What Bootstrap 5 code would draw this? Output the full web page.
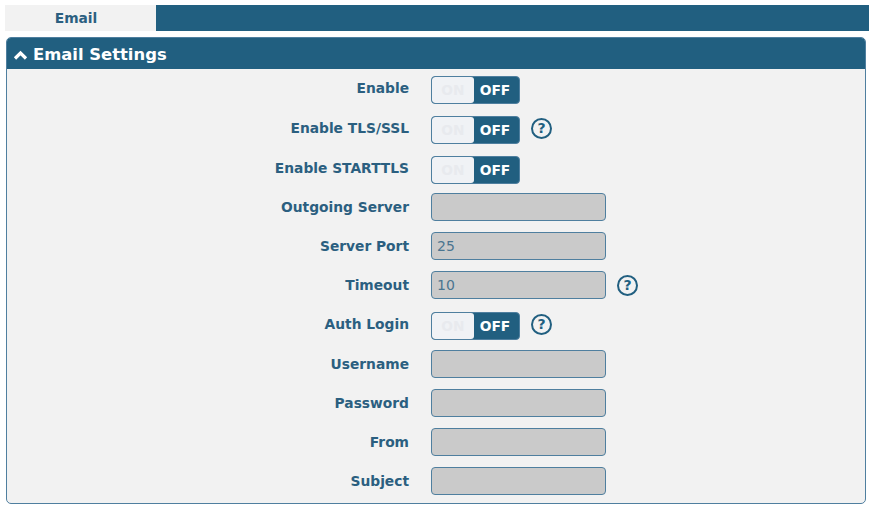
<!DOCTYPE html>
<html lang="en">
<head>
  <meta charset="UTF-8">
  <meta name="viewport" content="width=device-width, initial-scale=1.0">
  <title>Email Settings</title>
  <link href="https://cdn.jsdelivr.net/npm/bootstrap@5.3.0/dist/css/bootstrap.min.css" rel="stylesheet">
  <style>
    body {
      background-color: #fff;
      font-family: "DejaVu Sans", Verdana, sans-serif;
      color: #2b5f80;
      padding-top: 5px;
    }
    .tab-strip {
      background-color: #215f80;
      height: 26px;
      margin-left: 5px;
    }
    .tab-item {
      width: 151px;
      padding-right: 9px;
      background-color: #f2f2f2;
      color: #2b5f80;
      font-size: 13.8px;
      font-weight: 700;
      line-height: 26px;
      text-align: center;
    }
    .settings-panel {
      margin: 6px 3px 0 6px;
      height: 467px;
      background-color: #f2f2f2;
      border: 1px solid #4f7f9f;
      border-radius: 5px;
      overflow: hidden;
    }
    .settings-head {
      height: 31px;
      background-color: #215f80;
      color: #fff;
      font-size: 16.4px;
      font-weight: 700;
      padding-left: 6px;
      padding-top: 3px;
      gap: 5px;
    }
    .settings-body {
      padding-top: 7px;
    }
    .field-row {
      height: 28px;
      margin-bottom: 11px;
    }
    .field-row.gap-wide { margin-bottom: 12px; }
    .field-row.gap-wider { margin-bottom: 13px; }
    .field-row.gap-tight { margin-bottom: 10px; }
    .field-row.gap-tighter { margin-bottom: 9px; }
    .field-label {
      width: 402px;
      margin-right: 22px;
      text-align: right;
      font-size: 13.8px;
      font-weight: 700;
    }
    .field-label.label-up {
      margin-bottom: 4px;
    }
    .field-input {
      width: 175px;
      height: 28px;
      padding: 0 5px;
      font-family: inherit;
      font-size: 14px;
      color: #4a7590;
      background-color: #cacaca;
      border: 1.5px solid #4f7f9f;
      border-radius: 4px;
    }
    .field-input:disabled {
      background-color: #cacaca;
      opacity: 1;
    }
    .switch-box {
      width: 89px;
      height: 28px;
      background-color: #215f80;
      border: 1.5px solid #4f7f9f;
      border-radius: 4px;
      font-size: 13.8px;
      font-weight: 700;
      overflow: hidden;
    }
    .switch-on {
      width: 42px;
      height: 100%;
      background-color: #f0f2f5;
      color: #e8eaee;
      border-radius: 3px;
      text-align: center;
      line-height: 26px;
    }
    .switch-off {
      flex: 1;
      padding-right: 3px;
      color: #fff;
      text-align: center;
      line-height: 26px;
    }
    .help-mark {
      width: 21px;
      height: 21px;
      border: 2px solid #215f80;
      border-radius: 50%;
      color: #215f80;
      font-size: 14px;
      font-weight: 700;
      line-height: 17px;
      text-align: center;
      margin-left: 11px;
    }
  </style>
</head>
<body>

  <!-- tabs -->
  <div class="tab-strip d-flex">
    <div class="tab-item">Email</div>
  </div>

  <!-- email settings -->
  <div class="settings-panel">
    <div class="settings-head d-flex align-items-center">
      <svg width="15" height="10" viewBox="0 0 15 10"><polyline points="2,8.5 7.5,3 13,8.5" fill="none" stroke="#fff" stroke-width="3.2"/></svg>
      <span>Email Settings</span>
    </div>
    <div class="settings-body">
      <div class="field-row gap-wide d-flex align-items-center">
        <label class="field-label label-up">Enable</label>
        <div class="switch-box d-flex"><span class="switch-on">ON</span><span class="switch-off">OFF</span></div>
      </div>
      <div class="field-row gap-wide d-flex align-items-center">
        <label class="field-label label-up">Enable TLS/SSL</label>
        <div class="switch-box d-flex"><span class="switch-on">ON</span><span class="switch-off">OFF</span></div>
        <span class="help-mark mb-1">?</span>
      </div>
      <div class="field-row gap-tighter d-flex align-items-center">
        <label class="field-label label-up">Enable STARTTLS</label>
        <div class="switch-box d-flex"><span class="switch-on">ON</span><span class="switch-off">OFF</span></div>
      </div>
      <div class="field-row d-flex align-items-center">
        <label class="field-label">Outgoing Server</label>
        <input class="field-input" type="text" disabled>
      </div>
      <div class="field-row d-flex align-items-center">
        <label class="field-label">Server Port</label>
        <input class="field-input" type="text" value="25" disabled>
      </div>
      <div class="field-row gap-wider d-flex align-items-center">
        <label class="field-label">Timeout</label>
        <input class="field-input" type="text" value="10" disabled>
        <span class="help-mark">?</span>
      </div>
      <div class="field-row gap-tight d-flex align-items-center">
        <label class="field-label label-up">Auth Login</label>
        <div class="switch-box d-flex"><span class="switch-on">ON</span><span class="switch-off">OFF</span></div>
        <span class="help-mark mb-1">?</span>
      </div>
      <div class="field-row d-flex align-items-center">
        <label class="field-label">Username</label>
        <input class="field-input" type="text" disabled>
      </div>
      <div class="field-row d-flex align-items-center">
        <label class="field-label">Password</label>
        <input class="field-input" type="password" disabled>
      </div>
      <div class="field-row d-flex align-items-center">
        <label class="field-label">From</label>
        <input class="field-input" type="text" disabled>
      </div>
      <div class="field-row d-flex align-items-center">
        <label class="field-label">Subject</label>
        <input class="field-input" type="text" disabled>
      </div>
    </div>
  </div>

  <script src="https://cdn.jsdelivr.net/npm/bootstrap@5.3.0/dist/js/bootstrap.bundle.min.js"></script>
</body>
</html>
